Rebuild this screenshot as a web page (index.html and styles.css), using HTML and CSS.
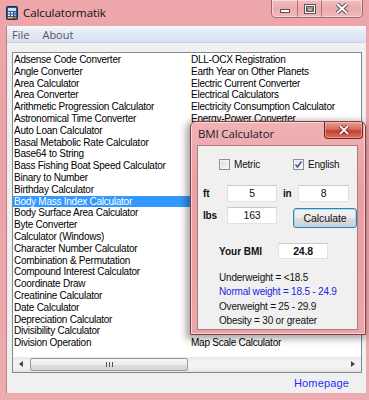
FILE: index.html
```html
<!DOCTYPE html>
<html lang="en">
<head>
  <meta charset="UTF-8">
  <meta name="viewport" content="width=device-width, initial-scale=1.0">
  <title>Calculatormatik</title>
  <link rel="stylesheet" href="styles.css">
</head>
<body>
  <div class="window">
    <!-- title bar -->
    <div class="titlebar">
      <svg class="app-icon" width="12" height="14" viewBox="0 0 12 14">
        <rect x="0.5" y="0.5" width="11" height="13" rx="1" fill="#3b5384" stroke="#1d2b4f"/>
        <rect x="2" y="2" width="8" height="3" fill="#bfe3f7"/>
        <rect x="2" y="6" width="2" height="1.5" fill="#e9f0fa"/>
        <rect x="5" y="6" width="2" height="1.5" fill="#e9f0fa"/>
        <rect x="8" y="6" width="2" height="1.5" fill="#7fb2e6"/>
        <rect x="2" y="8.5" width="2" height="1.5" fill="#e9f0fa"/>
        <rect x="5" y="8.5" width="2" height="1.5" fill="#e9f0fa"/>
        <rect x="8" y="8.5" width="2" height="1.5" fill="#7fb2e6"/>
        <rect x="2" y="11" width="5" height="1.5" fill="#f4b63c"/>
        <rect x="8" y="11" width="2" height="1.5" fill="#e8752a"/>
      </svg>
      <span class="title">Calculatormatik</span>
      <div class="caption-buttons">
        <span class="cap-btn cap-min">
          <svg width="12" height="6" viewBox="0 0 12 6"><rect x="1.5" y="1.5" width="9" height="3" fill="#fff" stroke="#555"/></svg>
        </span>
        <span class="cap-btn cap-max">
          <svg width="12" height="10" viewBox="0 0 12 10"><rect x="1.5" y="1.5" width="9" height="7" fill="none" stroke="#555" stroke-width="3"/><rect x="1.5" y="1.5" width="9" height="7" fill="none" stroke="#fff"/><rect x="3.5" y="4" width="5" height="3" fill="none" stroke="#777"/></svg>
        </span>
        <span class="cap-btn cap-close">
          <svg width="14" height="11" viewBox="0 0 14 11"><path d="M2 1 L12 10 M12 1 L2 10" stroke="#555" stroke-width="4"/><path d="M2 1 L12 10 M12 1 L2 10" stroke="#fff" stroke-width="2"/></svg>
        </span>
      </div>
    </div>

    <div class="client">
      <div class="menubar">
        <span class="menu-item">File</span>
        <span class="menu-item">About</span>
      </div>

      <div class="content">
        <div class="listbox">
          <div class="list-cols">
            <ul class="list-col">
              <li>Adsense Code Converter</li>
              <li>Angle Converter</li>
              <li>Area Calculator</li>
              <li>Area Converter</li>
              <li>Arithmetic Progression Calculator</li>
              <li>Astronomical Time Converter</li>
              <li>Auto Loan Calculator</li>
              <li>Basal Metabolic Rate Calculator</li>
              <li>Base64 to String</li>
              <li>Bass Fishing Boat Speed Calculator</li>
              <li>Binary to Number</li>
              <li>Birthday Calculator</li>
              <li class="selected">Body Mass Index Calculator</li>
              <li>Body Surface Area Calculator</li>
              <li>Byte Converter</li>
              <li>Calculator (Windows)</li>
              <li>Character Number Calculator</li>
              <li>Combination &amp; Permutation</li>
              <li>Compound Interest Calculator</li>
              <li>Coordinate Draw</li>
              <li>Creatinine Calculator</li>
              <li>Date Calculator</li>
              <li>Depreciation Calculator</li>
              <li>Divisibility Calculator</li>
              <li>Division Operation</li>
            </ul>
            <!-- rows 7-24 sit under the dialog -->
            <ul class="list-col">
              <li>DLL-OCX Registration</li>
              <li>Earth Year on Other Planets</li>
              <li>Electric Current Converter</li>
              <li>Electrical Calculators</li>
              <li>Electricity Consumption Calculator</li>
              <li>Energy-Power Converter</li>
              <li></li><li></li><li></li><li></li><li></li><li></li>
              <li></li><li></li><li></li><li></li><li></li><li></li>
              <li></li><li></li><li></li><li></li><li></li><li></li>
              <li>Map Scale Calculator</li>
            </ul>
          </div>
          <div class="hscroll">
            <span class="arrow arrow-left"></span>
            <div class="track">
              <div class="thumb"><span class="grip"></span></div>
            </div>
            <span class="arrow arrow-right"></span>
          </div>
        </div>
        <div class="footer">
          <a class="homepage" href="#">Homepage</a>
        </div>
      </div>
    </div>

    <!-- BMI dialog -->
    <div class="dialog">
      <div class="dialog-titlebar">
        <span class="dialog-title">BMI Calculator</span>
        <span class="dialog-close">
          <svg width="12" height="10" viewBox="0 0 12 10"><path d="M2 1 L10 9 M10 1 L2 9" stroke="#6b2020" stroke-width="3.6"/><path d="M2 1 L10 9 M10 1 L2 9" stroke="#fff" stroke-width="1.8"/></svg>
        </span>
      </div>
      <div class="dialog-body">
        <div class="check-row">
          <label class="check check-metric"><span class="box"></span>Metric</label>
          <label class="check"><span class="box checked">
            <svg width="9" height="9" viewBox="0 0 9 9"><path d="M1.5 4.5 L3.5 7 L7.5 1.5" fill="none" stroke="#3b55a0" stroke-width="1.6"/></svg>
          </span>English</label>
        </div>
        <div class="input-row">
          <span class="lbl">ft</span>
          <span class="field">5</span>
          <span class="lbl lbl-in">in</span>
          <span class="field field-in">8</span>
        </div>
        <div class="input-row row-lbs">
          <span class="lbl">lbs</span>
          <span class="field">163</span>
          <span class="btn">Calculate</span>
        </div>
        <div class="result-row">
          <span class="lbl lbl-bmi">Your BMI</span>
          <span class="field field-bmi">24.8</span>
        </div>
        <ul class="legend">
          <li>Underweight = &lt;18.5</li>
          <li class="current">Normal weight = 18.5 - 24.9</li>
          <li>Overweight = 25 - 29.9</li>
          <li>Obesity = 30 or greater</li>
        </ul>
      </div>
    </div>
  </div>
</body>
</html>
```

FILE: styles.css
```css
/* base */
body {
  margin: 0;
  background: #e9a2a6;
  font-family: "Liberation Sans", Arial, sans-serif;
}

ul {
  margin: 0;
  padding: 0;
  list-style: none;
}

/* main window frame */
.window {
  position: relative;
  width: 369px;
  height: 400px;
  overflow: hidden;
  background: linear-gradient(180deg, #eda7aa 0%, #eaa3a7 40%, #ecacaf 100%);
  display: flex;
  flex-direction: column;
}

.titlebar {
  height: 26px;
  display: flex;
  align-items: flex-start;
  flex-shrink: 0;
}

.app-icon {
  margin: 6px 0 0 6px;
}

.title {
  margin: 5px 0 0 5px;
  font-family: "Open Sans", "DejaVu Sans", sans-serif;
  font-size: 11.5px;
  color: #111;
  letter-spacing: -0.1px;
}

.caption-buttons {
  margin-left: auto;
  margin-right: 6px;
  display: flex;
  height: 17px;
  border: 1px solid rgba(90, 40, 45, 0.55);
  border-top: none;
  border-radius: 0 0 5px 5px;
  box-shadow: inset 0 0 0 1px rgba(255, 255, 255, 0.45);
  background: linear-gradient(180deg, rgba(255,255,255,0.25), rgba(255,255,255,0.05) 50%, rgba(255,255,255,0.2));
}

.cap-btn {
  display: flex;
  align-items: center;
  justify-content: center;
}

.cap-min {
  width: 25px;
  border-right: 1px solid rgba(90, 40, 45, 0.45);
}

.cap-min svg {
  margin-top: 5px;
}

.cap-max {
  width: 23px;
  border-right: 1px solid rgba(90, 40, 45, 0.45);
}

.cap-close {
  width: 40px;
}

/* client area */
.client {
  margin: 0 3px 7px 6px;
  height: 367px;
  background: #f0f0f0;
  border-left: 1px solid #b98487;
  display: flex;
  flex-direction: column;
}

.menubar {
  height: 17px;
  display: flex;
  align-items: center;
  gap: 13px;
  padding-left: 5px;
  background: linear-gradient(180deg, #f6f8fc 0%, #e3e9f5 45%, #d8e1f2 100%);
  border-bottom: 1px solid #c9d3e6;
  box-sizing: border-box;
}

.menu-item {
  font-family: "Open Sans", "DejaVu Sans", sans-serif;
  font-size: 11px;
  color: #555;
}

.content {
  flex: 1;
  display: flex;
  flex-direction: column;
  padding: 9px 4px 0 5px;
}

/* listbox */
.listbox {
  height: 321px;
  box-sizing: border-box;
  border: 1px solid #828790;
  background: #fff;
  display: flex;
  flex-direction: column;
}

.list-cols {
  flex: 1;
  display: flex;
  padding-top: 1px;
  overflow: hidden;
}

.list-col {
  width: 177px;
  flex-shrink: 0;
}

.list-col li {
  height: 11.8px;
  line-height: 11.8px;
  padding-left: 1px;
  font-size: 10px;
  letter-spacing: -0.25px;
  color: #000;
  white-space: nowrap;
}

.list-col li.selected {
  background: #3399ff;
  color: #fff;
}

.hscroll {
  height: 15px;
  display: flex;
  align-items: center;
  background: linear-gradient(180deg, #e6e6e6, #f2f2f2 30%, #f2f2f2 70%, #e6e6e6);
  flex-shrink: 0;
}

.arrow {
  width: 16px;
  height: 15px;
  position: relative;
}

.arrow::after {
  content: "";
  position: absolute;
  top: 4px;
  border-top: 3.5px solid transparent;
  border-bottom: 3.5px solid transparent;
}

.arrow-left::after {
  left: 6px;
  border-right: 4px solid #444;
}

.arrow-right::after {
  left: 6px;
  border-left: 4px solid #444;
}

.track {
  flex: 1;
  height: 15px;
  display: flex;
  align-items: center;
}

.thumb {
  width: 158px;
  height: 13px;
  margin-left: 1px;
  box-sizing: border-box;
  border: 1px solid #9a9a9a;
  border-radius: 2px;
  background: linear-gradient(180deg, #f6f6f6 0%, #ececec 50%, #dedede 51%, #d4d4d4 100%);
  display: flex;
  align-items: center;
  justify-content: center;
}

.grip {
  width: 7px;
  height: 5px;
  background: repeating-linear-gradient(90deg, #555 0 1px, transparent 1px 3px);
}

.footer {
  height: 20px;
  display: flex;
  align-items: center;
  justify-content: flex-end;
  padding-right: 13px;
}

.homepage {
  font-size: 11px;
  letter-spacing: 0.15px;
  color: #2a2aff;
  text-decoration: none;
}

/* BMI dialog (floats over the list) */
.dialog {
  position: absolute;
  left: 190px;
  top: 121px;
  width: 176px;
  height: 214px;
  box-sizing: border-box;
  border: 1px solid #8c3a3f;
  border-radius: 6px 6px 0 0;
  background: linear-gradient(180deg, #f0b2b5 0%, #e8a0a4 30%, #e9a6a9 100%);
  box-shadow: -2px 2px 7px 2px rgba(0, 0, 0, 0.35), inset 0 0 0 1px rgba(255, 255, 255, 0.5);
  display: flex;
  flex-direction: column;
}

.dialog-titlebar {
  height: 23px;
  display: flex;
  align-items: flex-start;
  flex-shrink: 0;
}

.dialog-title {
  margin: 4px 0 0 7px;
  font-family: "Open Sans", "DejaVu Sans", sans-serif;
  font-size: 11.5px;
  color: #1c1c2c;
  letter-spacing: -0.15px;
}

.dialog-close {
  margin-left: auto;
  margin-right: 2px;
  width: 39px;
  height: 17px;
  box-sizing: border-box;
  border: 1px solid #6e2226;
  border-top: none;
  border-radius: 0 0 4px 4px;
  background: linear-gradient(180deg, #e9a096 0%, #d66b5e 45%, #c2412f 55%, #d7735d 100%);
  box-shadow: inset 0 0 0 1px rgba(255, 200, 190, 0.5);
  display: flex;
  align-items: center;
  justify-content: center;
}

.dialog-body {
  flex: 1;
  margin: 0 7px 6px 6px;
  background: #f0f0f0;
  border: 1px solid #b07a7d;
  font-size: 10px;
  letter-spacing: -0.2px;
  color: #111;
}

.check-row {
  display: flex;
  margin-top: 13px;
  padding-left: 21px;
  height: 11px;
}

.check {
  display: flex;
  align-items: center;
  gap: 4px;
}

.check-metric {
  width: 74px;
}

.box {
  width: 11px;
  height: 11px;
  box-sizing: border-box;
  border: 1px solid #8e8f8f;
  background: linear-gradient(135deg, #dcdcdc, #f8f8f8);
  box-shadow: inset 0 0 0 1px #f4f4f4;
  display: flex;
  align-items: center;
  justify-content: center;
}

.box.checked {
  background: linear-gradient(135deg, #e4e8ee, #fafbfc);
}

.input-row {
  display: flex;
  align-items: center;
  margin-top: 15px;
  height: 17px;
  padding-left: 5px;
}

.row-lbs {
  margin-top: 5px;
  align-items: flex-start;
  height: 21px;
}

.row-lbs .lbl {
  line-height: 17px;
}

.lbl {
  font-weight: bold;
  width: 24px;
}

.lbl-in {
  width: 15px;
  margin-left: 6px;
}

.field {
  width: 50px;
  height: 17px;
  box-sizing: border-box;
  border: 1px solid #dfe3e8;
  border-top-color: #c6cad0;
  background: #fff;
  text-align: center;
  line-height: 15px;
  font-size: 10.5px;
}

.field-in {
  width: 51px;
}

.btn {
  margin: 1px 0 0 16px;
  width: 64px;
  height: 20px;
  box-sizing: border-box;
  border: 1px solid #3c7fb1;
  border-radius: 3px;
  background: linear-gradient(180deg, #f3f3f3 0%, #ebebeb 48%, #dddddd 52%, #cfcfcf 100%);
  box-shadow: inset 0 0 0 1px #9fdcf8;
  text-align: center;
  line-height: 18px;
  font-size: 10.5px;
  letter-spacing: -0.1px;
}

.result-row {
  display: flex;
  align-items: center;
  margin-top: 15px;
  height: 16px;
  padding-left: 21px;
}

.lbl-bmi {
  width: 59px;
  letter-spacing: 0;
}

.field-bmi {
  height: 16px;
  line-height: 14px;
  font-weight: bold;
}

.legend {
  margin-top: 11.7px;
  padding-left: 21px;
}

.legend li {
  height: 14.6px;
  line-height: 14.6px;
}

.legend li.current {
  color: #2323e6;
}
```
